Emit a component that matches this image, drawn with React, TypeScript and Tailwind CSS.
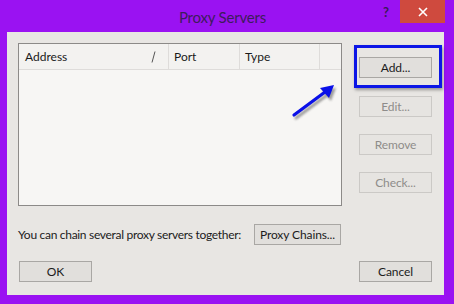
import React from "react";

const font = { fontFamily: 'Lato, "Noto Sans", sans-serif' } as React.CSSProperties;

function Btn({ children, disabled, className = "" }: { children: React.ReactNode; disabled?: boolean; className?: string }) {
  return (
    <div
      className={
        "flex items-center justify-center h-[21px] border text-[12px] tracking-[-0.1px] whitespace-nowrap " +
        (disabled ? "border-[#cbc9c6] text-[#8e8c8a] bg-[#e6e4e1] " : "border-[#a9a7a4] text-[#1b1b1b] bg-[#e1dfdc] ") +
        className
      }
    >
      {children}
    </div>
  );
}

export default function App() {
  return (
    <div className="relative w-[454px] h-[304px] bg-[#9a12f2] flex flex-col overflow-hidden" style={font}>
      {/* title bar */}
      <div className="flex h-[32px] shrink-0">
        <div className="flex-1" />
        <div className="pt-[6px] text-[15px] tracking-[-0.2px] text-[#3e1c5c] leading-[22px]">Proxy Servers</div>
        <div className="flex-1 flex justify-end items-start pr-[9px]">
          <div className="mt-[3px] mr-[11px] text-[13px] font-bold text-[#3a1a58]">?</div>
          <div className="w-[45px] h-[23px] bg-[#cf4a3e] flex items-center justify-center">
            <svg width="10" height="10" viewBox="0 0 10 10">
              <path d="M1 1 L9 9 M9 1 L1 9" stroke="#ffffff" strokeWidth="1.6" />
            </svg>
          </div>
        </div>
      </div>
      {/* content */}
      <div className="ml-[7px] mr-[10px] h-[263px] bg-[#e8e6e3] flex flex-col pl-[11px] pr-[12px] pt-[11px]">
        <div className="flex">
          <div className="w-[324px] h-[163px] border border-[#8c8a88] bg-[#f7f6f4] flex flex-col">
            <div className="flex h-[26px] bg-[#f3f2f0] border-b border-[#dedcda] text-[12px] text-[#1a1a1a]">
              <div className="w-[150px] flex items-center justify-between pl-[6px] pr-[12px] border-r border-[#dedcda]">
                <span>Address</span>
                <svg width="5" height="12" viewBox="0 0 5 12">
                  <path d="M4 0.5 L1 11.5" stroke="#555" strokeWidth="1" />
                </svg>
              </div>
              <div className="w-[71px] flex items-center pl-[5px] border-r border-[#dedcda]">Port</div>
              <div className="w-[80px] flex items-center pl-[5px] border-r border-[#dedcda]">Type</div>
              <div className="flex-1" />
            </div>
          </div>
          <div className="ml-[17px] w-[73px] flex flex-col pt-[14px]">
            <div className="relative">
              <div className="absolute left-[-5px] right-[-10px] top-[-12px] bottom-[-10px] border-[3px] border-[#0c16e6] shadow-[1px_2px_3px_rgba(0,0,0,0.35)]" />
              <Btn>Add...</Btn>
            </div>
            <Btn disabled className="mt-[18px]">Edit...</Btn>
            <Btn disabled className="mt-[17px]">Remove</Btn>
            <Btn disabled className="mt-[17px]">Check...</Btn>
          </div>
        </div>
        <div className="flex items-center mt-[18px]">
          <span className="w-[236px] whitespace-nowrap text-[12px] tracking-[-0.3px] text-[#1b1b1b]">You can chain several proxy servers together:</span>
          <Btn className="w-[87px]">Proxy Chains...</Btn>
        </div>
        <div className="flex justify-between mt-[16px] pl-[1px]">
          <Btn className="w-[73px]">OK</Btn>
          <Btn className="w-[73px]">Cancel</Btn>
        </div>
      </div>
      {/* annotation arrow */}
      <svg className="absolute left-[285px] top-[78px]" width="60" height="50" viewBox="0 0 60 50">
        <defs>
          <filter id="sh" x="-20%" y="-20%" width="140%" height="140%">
            <feGaussianBlur stdDeviation="1.2" />
          </filter>
        </defs>
        <g filter="url(#sh)" opacity="0.45" transform="translate(2,3)">
          <path d="M9 37 L40 14" stroke="#333" strokeWidth="3.2" strokeLinecap="round" />
          <path d="M49 7 L35 10 L44 20 Z" fill="#333" />
        </g>
        <path d="M9 37 L40 14" stroke="#0a10e8" strokeWidth="3.2" strokeLinecap="round" />
        <path d="M49 7 L35 10 L44 20 Z" fill="#0a10e8" />
      </svg>
    </div>
  );
}
